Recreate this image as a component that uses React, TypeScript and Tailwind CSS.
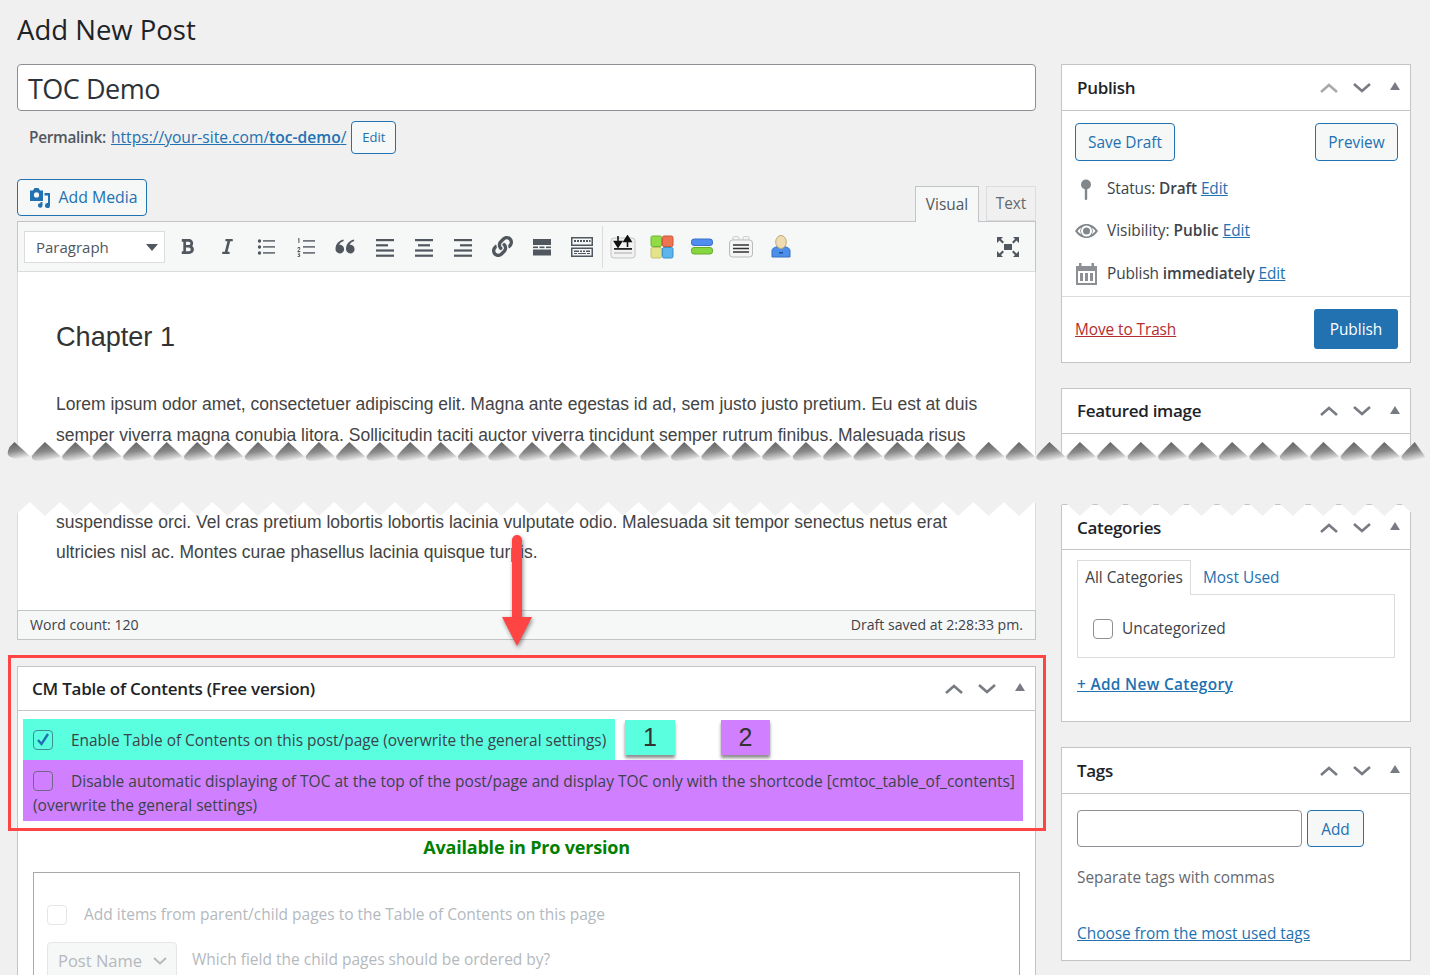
import type { ReactNode } from "react";
import { FaBold, FaItalic, FaLink } from "react-icons/fa";

const sans = "[font-family:'Open_Sans',sans-serif]";
const linkCls = "text-[#2271b1] underline";
const btnCls =
    "flex items-center justify-center rounded-[4px] border border-[#2271b1] bg-[#f6f7f7] text-[#2271b1]";

function Bars({ rows }: { rows: [number, number][] }) {
    return (
        <svg width="20" height="20" viewBox="0 0 20 20" fill="#50575e">
            {rows.map(([x, w], i) => (
                <rect key={i} x={x} y={2 + i * 5.2} width={w} height="2.2" />
            ))}
        </svg>
    );
}

const toolbarIcons: ReactNode[] = [
    <FaBold className="text-[17px] text-[#50575e]" />,
    <FaItalic className="text-[17px] text-[#50575e]" />,
    <svg width="20" height="20" viewBox="0 0 20 20" fill="#50575e">
        <circle cx="3.500" cy="4" r="1.700" />
        <circle cx="3.500" cy="10" r="1.700" />
        <circle cx="3.500" cy="16" r="1.700" />
        <rect x="7" y="3.200" width="12" height="1.400" />
        <rect x="7" y="9.200" width="12" height="1.400" />
        <rect x="7" y="15.200" width="12" height="1.400" />
    </svg>,
    <svg width="20" height="20" viewBox="0 0 20 20" fill="#50575e">
        <path d="M2 1.500 3.400 1v5H2.400V2.200L2 2.400zM1.400 11.400c.2-1.600 2.800-1.800 2.900 0 0 1.200-1.500 1.600-1.900 2.500h2v1H1.400c0-2 2-2.400 2-3.500 0-.7-.9-.6-1 .1zM1.500 15.800h2.800l-1.200 1.300c1.700.2 1.500 2.900-.4 2.900-.8 0-1.200-.3-1.400-.7l.7-.5c.3.500 1.200.4 1.200-.3 0-.5-.5-.7-1.100-.6v-.7l1-1H1.500z" />
        <rect x="7" y="3.200" width="12" height="1.400" />
        <rect x="7" y="9.200" width="12" height="1.400" />
        <rect x="7" y="15.200" width="12" height="1.400" />
    </svg>,
    <svg width="20" height="15" viewBox="0 0 20 15" fill="#50575e">
        <path d="M8.300 0.500C4 1.500 0.500 5 0.500 10a4.300 4.300 0 1 0 4.300-4.200c-.3 0-.5 0-.7.100C4.700 4.200 6.400 2.800 8.800 2z" />
        <path d="M18.800 0.500C14.500 1.500 11 5 11 10a4.300 4.300 0 1 0 4.300-4.200c-.3 0-.5 0-.7.100.6-1.700 2.300-3.100 4.700-3.900z" />
    </svg>,
    <Bars rows={[[1, 18], [1, 12], [1, 18], [1, 18]]} />,
    <Bars rows={[[1, 18], [4, 12], [1, 18], [1, 18]]} />,
    <Bars rows={[[1, 18], [7, 12], [1, 18], [1, 18]]} />,
    <FaLink className="text-[21px] text-[#50575e]" />,
    <svg width="20" height="20" viewBox="0 0 20 20" fill="#50575e">
        <rect x="1" y="2" width="18" height="6" />
        <rect x="1" y="9.500" width="5" height="1.600" />
        <rect x="7.500" y="9.500" width="5" height="1.600" />
        <rect x="14" y="9.500" width="5" height="1.600" />
        <rect x="1" y="12.500" width="18" height="6" />
    </svg>,
    <svg width="24" height="22" viewBox="0 0 24 22" fill="#50575e">
        <path d="M1 1h22v9H1zm1.500 1.500v6h19v-6zM1 11.500h22V21H1zm1.500 1.500v6.500h19V13z" />
        <path d="M4 4h2v2H4zm3 0h2v2H7zm3 0h2v2h-2zm3 0h2v2h-2zm3 0h2v2h-2zm3 0h1.500v2H19zM4 14.500h5v1.500H4zm6 0h2v1.500h-2zm3 0h2v1.500h-2zm3 0h4v1.500h-4zM4 17h3v1H4zm4 0h8v1H8zm9 0h3v1h-3z" />
    </svg>,
];

const pluginIcons: ReactNode[] = [
    <svg width="26" height="24" viewBox="0 0 26 24">
        <rect x="1" y="3" width="24" height="20" rx="3" fill="#f2f2f2" stroke="#c4c4c4" />
        <path d="M8 1v9M4.500 6.500 8 12l3.500-5.500zM17.500 12V3M14 6.500 17.500 1 21 6.500z" fill="#111" stroke="#111" strokeWidth="1.600" />
        <rect x="4" y="13" width="18" height="1.800" fill="#222" />
        <rect x="4" y="17.500" width="18" height="1" fill="#aaa" />
    </svg>,
    <svg width="24" height="24" viewBox="0 0 24 24">
        <rect x="1" y="1" width="10.500" height="10.500" rx="1.500" fill="#8fdc45" stroke="#6cb52e" />
        <rect x="12.500" y="1" width="10.500" height="10.500" rx="1.500" fill="#ee7350" stroke="#c9573a" />
        <rect x="1" y="12.500" width="10.500" height="10.500" rx="1.500" fill="#e4e38a" stroke="#c4c36a" />
        <rect x="12.500" y="12.500" width="10.500" height="10.500" rx="1.500" fill="#5eb5ee" stroke="#3b90c9" />
    </svg>,
    <svg width="24" height="17" viewBox="0 0 24 17">
        <rect x="1.500" y="1" width="21" height="6.500" rx="2.500" fill="#4f8df0" stroke="#3a70c8" />
        <rect x="1.500" y="9.500" width="21" height="6.500" rx="2.500" fill="#86d63f" stroke="#66ad2b" />
    </svg>,
    <svg width="26" height="24" viewBox="0 0 26 24">
        <rect x="5" y="1.500" width="6" height="5" rx="1.500" fill="#f4f4f4" stroke="#ccc" />
        <rect x="15" y="1.500" width="6" height="5" rx="1.500" fill="#f4f4f4" stroke="#ccc" />
        <rect x="1.500" y="5" width="23" height="17" rx="3" fill="#f4f4f4" stroke="#bbb" />
        <path d="M5 10h16M5 13.500h16M5 17h16" stroke="#333" strokeWidth="1.500" />
    </svg>,
    <svg width="20" height="23" viewBox="0 0 20 23">
        <path d="M1 22v-6c0-3 3-4.500 9-4.500s9 1.500 9 4.500v6z" fill="#4c8ee8" stroke="#3670c4" />
        <ellipse cx="10" cy="7" rx="5.300" ry="6.500" fill="#efdcb0" stroke="#bfa878" />
        <rect x="8" y="17" width="4" height="1.500" fill="#1d4f9c" />
    </svg>,
];

function Chevrons({ muted = false }: { muted?: boolean }) {
    return (
        <div className="flex items-center">
            <svg width="18" height="10" viewBox="0 0 18 10" fill="none" stroke={muted ? "#a7aaad" : "#787c82"} strokeWidth="2.600">
                <path d="M1 9l8-7 8 7" />
            </svg>
            <svg width="18" height="10" viewBox="0 0 18 10" fill="none" stroke="#787c82" strokeWidth="2.600" className="ml-[15px]">
                <path d="M1 1l8 7 8-7" />
            </svg>
            <svg width="10" height="8" viewBox="0 0 10 8" fill="#787c82" className="ml-[19px] mb-[3px]">
                <path d="M5 0l5 8H0z" />
            </svg>
        </div>
    );
}

function PanelHead({ title, muted, height, wide }: { title: string; muted?: boolean; height: string; wide?: boolean }) {
    return (
        <div className={`flex items-center justify-between border-b border-[#c3c4c7] ${height} ${wide ? "pl-[14px] pr-[10px]" : "pl-[15px] pr-[10px]"}`}>
            <span className={`text-[17px] font-semibold text-[#1d2327] ${wide ? "tracking-[-0.23px]" : "tracking-[-0.3px]"}`}>{title}</span>
            <Chevrons muted={muted} />
        </div>
    );
}

function Box({ checked, border = "border-[#8c8f94]" }: { checked?: boolean; border?: string }) {
    return (
        <span className={`flex h-[20px] w-[20px] shrink-0 items-center justify-center rounded-[4px] border bg-transparent ${border}`}>
            {checked && (
                <svg width="14" height="13" viewBox="0 0 14 13" fill="none" stroke="#2271b1" strokeWidth="2.400">
                    <path d="M2 7l3.500 4L12 1" />
                </svg>
            )}
        </span>
    );
}

function MetaRow({ icon, className, children }: { icon: ReactNode; className: string; children: ReactNode }) {
    return (
        <div className={`flex items-center whitespace-nowrap text-[#3c434a] ${className}`}>
            <span className="flex w-[32px] shrink-0 items-center justify-center pr-[10px]">{icon}</span>
            <span>{children}</span>
        </div>
    );
}

// the torn-paper band across the middle of the screenshot
function Tear() {
    const step = 30.44;
    const peaks = Array.from({ length: 47 }, (_, i) => 14.5 + i * step);
    const top = peaks.map((p) => `L${p} 6 L${p + step / 2} 20`).join(" ");
    const bottom = [...peaks].reverse().map((p) => `L${p + step / 2} 66 L${p} 80`).join(" ");
    return (
        <svg className="pointer-events-none absolute left-0 top-[436px]" width="1430" height="84" viewBox="0 0 1430 84">
            <defs>
                <linearGradient id="tooth" x1="0.3" y1="0" x2="0.55" y2="1">
                    <stop offset="0" stopColor="#606060" />
                    <stop offset="0.5" stopColor="#8a8a8a" />
                    <stop offset="1" stopColor="#f0f0f0" />
                </linearGradient>
            </defs>
            <path d={`M0 20 ${top} L1430 20 L1430 66 ${bottom} L0 66 Z`} fill="#f0f0f0" />
            {peaks.map((p, i) => {
                const right = i === peaks.length - 1 ? p + 10 : p + step / 2;
                const shape =
                    i === 0
                        ? `M${p - 5} 11 L${p} 6 L${right} 20 L${right} 21 Q${p + 3} 25 ${p - 4} 21 Q${p - 9} 19 ${p - 5} 11 Z`
                        : `M${p - 8} 14 L${p} 6 L${right} 20 L${right} 21 Q${p + 3} 25 ${p - 8} 25 Q${p - 14} 24 ${p - 13} 20 Z`;
                return <path key={p} d={shape} fill="url(#tooth)" />;
            })}
        </svg>
    );
}

export default function App() {
    return (
        <div className={`relative h-[975px] w-[1430px] overflow-hidden bg-[#f0f0f0] text-[15.400px] ${sans}`}>
            {/* above the tear */}
            <div className="flex h-[470px] gap-[25px] overflow-hidden pl-[17px]">
                <div className="w-[1019px] shrink-0">
                    <h1 className="flex h-[64px] items-center pb-[4px] text-[27.500px] text-[#1d2327]">Add New Post</h1>
                    <div className="flex h-[47px] items-center rounded-[4px] border border-[#8c8f94] bg-white px-[10px] pt-[3px] text-[27px] tracking-[-0.5px] text-[#2c3338]">
                        TOC Demo
                    </div>
                    <div className="mt-[10px] flex h-[33px] items-center pl-[12px] text-[#50575e]">
                        <b className="pt-[1px] font-semibold tracking-[-0.3px]">Permalink:</b>
                        <span className={`ml-[5px] pt-[1px] text-[15.600px] ${linkCls}`}>
                            https://your-site.com/<b className="font-semibold">toc-demo</b>/
                        </span>
                        <span className={`ml-[5px] h-[33px] w-[45px] text-[13px] ${btnCls}`}>Edit</span>
                    </div>
                    <div className="mt-[25px] flex h-[42px] items-start justify-between">
                        <div className={`h-[37px] w-[130px] gap-[8px] pl-[2px] text-[15.800px] ${btnCls}`}>
                            <svg width="22" height="22" viewBox="0 0 22 22" fill="#2271b1">
                                <path fillRule="evenodd" d="M1 3.500h3L5.500 1h4L11 3.500h3V14H1zM7.500 5.300a2.600 2.600 0 1 0 0 5.200 2.600 2.600 0 0 0 0-5.200z" />
                                <path d="M15.500 6H21v12.500a2.500 2.500 0 1 1-2-2.400V8.500h-3.500zM13.500 15v3.500a2.300 2.300 0 1 1-2-2.300V15z" />
                            </svg>
                            Add Media
                        </div>
                        <div className="z-10 mt-[7px] flex items-end gap-[7px] text-[#50575e]">
                            <div className="flex h-[36px] w-[64px] items-center justify-center border border-b-0 border-[#c3c4c7] bg-[#f6f7f7]">Visual</div>
                            <div className="mb-px flex h-[35px] w-[50px] items-center justify-center border border-[#dcdcde] bg-[#f0f0f0] pt-[1px] text-[#646970]">Text</div>
                        </div>
                    </div>
                    <div className="flex h-[51px] items-center border border-[#c3c4c7] border-b-[#dcdcde] bg-[#f6f7f7] pl-[6px] pr-[16px]">
                        <div className="flex h-[32px] w-[141px] shrink-0 items-center justify-between border border-[#dcdcde] bg-white pl-[11px] pr-[6px] pt-[1px] text-[15px] text-[#50575e]">
                            Paragraph
                            <svg width="12" height="7" viewBox="0 0 12 7" fill="#50575e"><path d="M0 0h12L6 7z" /></svg>
                        </div>
                        <div className="ml-[3px] flex items-center">
                            {toolbarIcons.map((icon, i) => (
                                <span key={i} className="flex h-[30px] w-[39.400px] items-center justify-center">{icon}</span>
                            ))}
                        </div>
                        <span className="ml-[1px] h-[42px] w-px bg-[#dcdcde]" />
                        <div className="flex items-center">
                            {pluginIcons.map((icon, i) => (
                                <span key={i} className="flex h-[30px] w-[39.400px] items-center justify-center">{icon}</span>
                            ))}
                        </div>
                        <svg className="ml-auto" width="22" height="20" viewBox="0 0 22 20" fill="#50575e">
                            <rect x="7" y="7" width="8" height="6" />
                            <path d="M0 0h6L4 2l3 3-1.500 1.500-3-3L0 6zM22 0h-6l2 2-3 3 1.500 1.500 3-3L22 6zM0 20h6l-2-2 3-3-1.500-1.500-3 3L0 14zM22 20h-6l2-2-3-3 1.500-1.500 3 3 2.500-2.500z" />
                        </svg>
                    </div>
                    <div className="h-[200px] border-x border-[#dcdcde] bg-white pl-[38px] pt-[45px] [font-family:'Liberation_Sans',sans-serif] text-[#444]">
                        <div className="text-[27.100px] leading-[40px] text-[#333]">Chapter 1</div>
                        <p className="mt-[32px] whitespace-nowrap text-[17.500px] leading-[30.500px]">
                            Lorem ipsum odor amet, consectetuer adipiscing elit. Magna ante egestas id ad, sem justo justo pretium. Eu est at duis
                            <br />
                            semper viverra magna conubia litora. Sollicitudin taciti auctor viverra tincidunt semper rutrum finibus. Malesuada risus
                        </p>
                    </div>
                </div>
                <div className="w-[350px] shrink-0 pt-[64px]">
                    <div className="h-[299px] border border-[#c3c4c7] bg-white">
                        <PanelHead title="Publish" muted height="h-[46px]" />
                        <div className="flex justify-between pl-[13px] pr-[12px] pt-[12px]">
                            <span className={`h-[38px] w-[100px] pt-[1px] ${btnCls}`}>Save Draft</span>
                            <span className={`h-[38px] w-[83px] pt-[1px] ${btnCls}`}>Preview</span>
                        </div>
                        <MetaRow className="mt-[13px] h-[30px] pl-[13px] tracking-[-0.1px]" icon={
                            <svg width="12" height="21" viewBox="0 0 12 21" fill="#82878c"><circle cx="6" cy="5.500" r="5" /><rect x="4.800" y="8" width="2.400" height="13" rx="1" /></svg>
                        }>
                            Status: <b className="font-semibold">Draft</b> <span className={linkCls}>Edit</span>
                        </MetaRow>
                        <MetaRow className="mt-[12px] h-[30px] pl-[13px]" icon={
                            <svg width="23" height="14" viewBox="0 0 23 14" className="shrink-0" fill="#82878c"><path fillRule="evenodd" d="M0 7c3-4.500 7-7 11.500-7S20 2.500 23 7c-3 4.500-7 7-11.500 7S3 11.500 0 7zm11.500-5.500a5.500 5.500 0 1 0 0 11 5.500 5.500 0 0 0 0-11zM2.500 7c1 1.300 2.200 2.400 3.500 3.200a7 7 0 0 1 0-6.400C4.700 4.600 3.500 5.700 2.500 7zm18 0c-1-1.300-2.200-2.400-3.500-3.200a7 7 0 0 1 0 6.400c1.300-.8 2.500-1.900 3.500-3.200z" /><circle cx="11.500" cy="7" r="3.500" /></svg>
                        }>
                            Visibility: <b className="font-semibold">Public</b> <span className={linkCls}>Edit</span>
                        </MetaRow>
                        <MetaRow className="mt-[13px] h-[30px] pl-[13px] tracking-[-0.1px]" icon={
                            <svg width="21" height="22" viewBox="0 0 21 22" className="shrink-0" fill="#8c8f94"><path fillRule="evenodd" d="M0 3h3V0h2.500v3h10V0H18v3h3v19H0zm2 5v12h17V8z" /><path d="M4 10h3v8H4zm5 0h3v8H9zm5 0h3v8h-3z" /></svg>
                        }>
                            Publish <b className="font-semibold">immediately</b> <span className={linkCls}>Edit</span>
                        </MetaRow>
                        <div className="mt-[7px] flex h-[65px] items-center justify-between border-t border-[#dcdcde] pl-[13px] pr-[12px]">
                            <span className="pt-[1px] tracking-[-0.08px] text-[#b32d2e] underline">Move to Trash</span>
                            <span className="flex h-[40px] w-[84px] items-center justify-center rounded-[3px] bg-[#2271b1] pt-[1px] text-white">Publish</span>
                        </div>
                    </div>
                    <div className="mt-[25px] h-[120px] border border-[#c3c4c7] bg-white">
                        <PanelHead title="Featured image" height="h-[45px]" />
                    </div>
                </div>
            </div>

            {/* below the tear */}
            <div className="flex gap-[25px] pl-[17px]">
                <div className="w-[1019px] shrink-0">
                    <div className="h-[140px] border-x border-[#dcdcde] bg-white pl-[38px] pt-[37px] [font-family:'Liberation_Sans',sans-serif] text-[#444]">
                        <p className="whitespace-nowrap text-[17.500px] leading-[30px]">
                            suspendisse orci. Vel cras pretium lobortis lobortis lacinia vulputate odio. Malesuada sit tempor senectus netus erat
                            <br />
                            ultricies nisl ac. Montes curae phasellus lacinia quisque turpis.
                        </p>
                    </div>
                    <div className="flex h-[30px] items-center justify-between border border-[#c3c4c7] bg-[#f6f7f7] px-[12px] text-[14.100px] text-[#3c434a]">
                        <span>Word count: 120</span>
                        <span>Draft saved at 2:28:33 pm.</span>
                    </div>
                    <div className="mt-[26px] border border-[#c3c4c7] bg-white">
                        <PanelHead title="CM Table of Contents (Free version)" height="h-[44px]" wide />
                        <div className="pl-[5px] pr-[12px] pt-[8px] text-[#3c434a]">
                            <div className="flex h-[41px]">
                                <div className="flex w-[592px] items-center bg-[#5affe0] pl-[10px]">
                                    <Box checked border="border-[#3f8f96]" />
                                    <span className="ml-[18px] whitespace-nowrap pt-[2px] text-[15.430px]">Enable Table of Contents on this post/page (overwrite the general settings)</span>
                                </div>
                                <span className="ml-[10px] mt-[1px] flex h-[35px] w-[50px] items-center justify-center bg-[#5affe0] text-[25px] text-[#333] shadow-[0_3px_3px_rgba(0,0,0,0.45)] [font-family:'Liberation_Sans',sans-serif]">1</span>
                                <span className="ml-[46px] mt-[1px] flex h-[35px] w-[49px] items-center justify-center bg-[#d080ff] text-[25px] text-[#333] shadow-[0_3px_3px_rgba(0,0,0,0.45)] [font-family:'Liberation_Sans',sans-serif]">2</span>
                            </div>
                            <div className="h-[61px] bg-[#d080ff] pl-[10px] pt-[9px] text-[15.500px] leading-[24px]">
                                <div className="flex items-center whitespace-nowrap">
                                    <Box border="border-[#75658a]" />
                                    <span className="ml-[18px]">Disable automatic displaying of TOC at the top of the post/page and display TOC only with the shortcode [cmtoc_table_of_contents]</span>
                                </div>
                                <div>(overwrite the general settings)</div>
                            </div>
                        </div>
                        <div className="mt-[11px] text-center text-[18px] font-bold leading-[30px] tracking-[-0.2px] text-[#008000]">Available in Pro version</div>
                        <div className="mx-[15px] mt-[10px] h-[200px] border border-[#aaa] pl-[13px] pt-[30px] text-[15.500px] text-[#b4b9be]">
                            <div className="flex items-center">
                                <span className="h-[20px] w-[20px] shrink-0 rounded-[4px] border border-[#e5e6e7]" />
                                <span className="ml-[17px]">Add items from parent/child pages to the Table of Contents on this page</span>
                            </div>
                            <div className="mt-[16px] flex items-center">
                                <span className="flex h-[40px] w-[130px] items-center justify-between rounded-[4px] border border-[#e5e6e7] bg-[#f6f7f7] pb-[2px] pl-[10px] pr-[9px] text-[16.500px]">
                                    Post Name
                                    <svg width="14" height="8" viewBox="0 0 14 8" fill="none" stroke="#b4b9be" strokeWidth="2"><path d="M1 1l6 5.500L13 1" /></svg>
                                </span>
                                <span className="ml-[15px] -translate-y-[3px]">Which field the child pages should be ordered by?</span>
                            </div>
                        </div>
                    </div>
                </div>
                <div className="w-[350px] shrink-0 pt-[34px]">
                    <div className="h-[218px] border border-[#c3c4c7] bg-white">
                        <PanelHead title="Categories" height="h-[45px] pt-[1px]" />
                        <div className="px-[15px] pt-[10px]">
                            <div className="flex h-[35px]">
                                <span className="z-10 flex h-[35px] w-[114px] items-center justify-center border border-b-0 border-[#dcdcde] bg-white text-[#3c434a]">All Categories</span>
                                <span className="ml-[12px] flex items-center text-[#2271b1]">Most Used</span>
                            </div>
                            <div className="-mt-px flex h-[64px] w-[318px] items-center border border-[#dcdcde] pl-[15px] pt-[6px] text-[#3c434a]">
                                <Box />
                                <span className="ml-[9px]">Uncategorized</span>
                            </div>
                            <div className={`mt-[15px] font-semibold tracking-[0.33px] ${linkCls}`}>+ Add New Category</div>
                        </div>
                    </div>
                    <div className="mt-[25px] h-[214px] border border-[#c3c4c7] bg-white">
                        <PanelHead title="Tags" height="h-[46px]" />
                        <div className="px-[15px] pt-[16px]">
                            <div className="flex">
                                <span className="h-[37px] w-[225px] rounded-[4px] border border-[#8c8f94]" />
                                <span className={`ml-[5px] h-[37px] w-[57px] pt-[2px] ${btnCls}`}>Add</span>
                            </div>
                            <div className="mt-[19px] leading-[24px] text-[#646970]">Separate tags with commas</div>
                            <div className={`mt-[32px] leading-[24px] ${linkCls}`}>Choose from the most used tags</div>
                        </div>
                    </div>
                </div>
            </div>

            <Tear />

            {/* annotations */}
            <div className="pointer-events-none absolute left-[8px] top-[655px] h-[176px] w-[1038px] border-[3px] border-[#ff4444]" />
            <svg className="pointer-events-none absolute left-[498px] top-[531px] drop-shadow-[1px_2px_2px_rgba(0,0,0,0.45)]" width="38" height="118" viewBox="0 0 38 118" fill="#ff4444">
                <path d="M14 9a5 5 0 0 1 10 0v77h10L19 115 4 86h10z" />
            </svg>
        </div>
    );
}
